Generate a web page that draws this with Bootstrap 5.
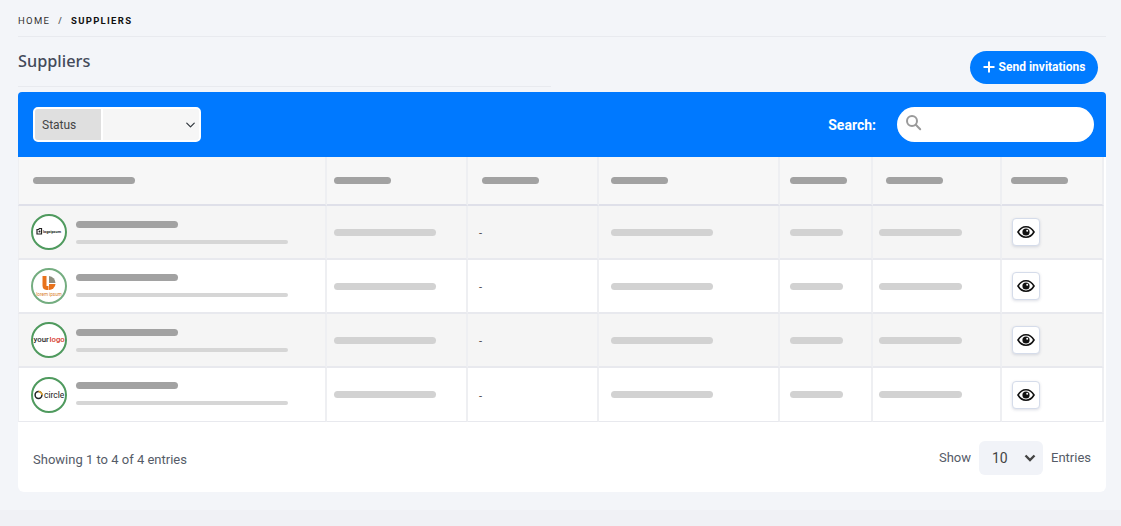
<!DOCTYPE html>
<html lang="en">
<head>
	<meta charset="utf-8">
	<meta name="viewport" content="width=device-width, initial-scale=1">
	<link href="https://cdn.jsdelivr.net/npm/bootstrap@5.3.3/dist/css/bootstrap.min.css" rel="stylesheet">
	<script src="https://cdn.jsdelivr.net/npm/bootstrap@5.3.3/dist/js/bootstrap.bundle.min.js"></script>
	<title>Suppliers</title>
	<style>
		body { background: linear-gradient(#f3f5f9 510px, #f0f1f5 510px); font-family: Roboto, sans-serif; overflow: hidden; }
		.page-wrap { padding: 0 15px 0 18px; height: 526px; }
		.crumb-bar { height: 37px; padding-top: 15px; border-bottom: 1px solid #e8eaef; }
		.crumb-bar .breadcrumb { --bs-breadcrumb-divider-color: #666; --bs-breadcrumb-item-padding-x: 8px; font-size: 9.5px; line-height: 11px; letter-spacing: 1.3px; margin: 0; }
		.crumb-bar .breadcrumb-item { color: #333; }
		.crumb-bar .breadcrumb-item.active { color: #111; font-weight: 700; }
		.title-row { height: 55px; }
		.title-left { width: 533px; height: 50px; border-bottom: 1px solid #e8eaef; }
		.title-left h1 { font-family: "Noto Sans", sans-serif; font-size: 16.3px; font-weight: 500; color: #434a5a; margin: 13px 0 0; line-height: 22px; }
		.invite-btn { background: #007bff; color: #fff; border: 0; border-radius: 17px; width: 128px; height: 33px; margin: 14px 8px 0 0; font-size: 12px; font-weight: 700; padding: 0 0 2px; }
		.filter-bar { background: #0079ff; height: 65px; padding: 0 12px 0 15px; border-radius: 4px 4px 0 0; }
		.status-group { width: 168px; height: 35px; border: 2px solid #fff; border-radius: 5px; background: #f6f6f6; flex-wrap: nowrap; overflow: hidden; }
		.status-group .input-group-text { width: 67px; height: 31px; background: #dfdfdf; border: 0; border-radius: 0; font-size: 12px; color: #444; padding: 0 0 0 7px; }
		.status-group .form-select { height: 31px; border: 0; border-left: 2px solid #fff; border-radius: 0; background-color: #f6f6f6; background-size: 13px 10px; background-position: right 2px center; }
		.search-label { color: #fff; font-size: 14px; font-weight: 700; margin: 2px 21px 0 0; }
		.search-box { width: 197px; height: 35px; }
		.search-box .form-control { height: 35px; border: 0; border-radius: 18px; padding-left: 32px; }
		.search-ico { position: absolute; left: 8px; top: 7px; }
		.main-panel { background: #fff; border-radius: 0 0 6px 6px; height: 335px; }
		.supplier-table { table-layout: fixed; width: 1086px; margin: 0; border-collapse: separate; border-spacing: 0; }
		.supplier-table th, .supplier-table td { padding: 0; vertical-align: middle; border-bottom: 2px solid #e8e9ee; border-right: 2px solid #eeeff2; box-shadow: none; }
		.supplier-table th { height: 49px; background: #f7f7f7; border-bottom-color: #dfe0e9; }
		.supplier-table td { height: 54px; background: #fff; }
		.supplier-table tbody tr:nth-child(odd) td { background: #f5f5f5; }
		.supplier-table tbody tr:last-child td { border-bottom-width: 1px; height: 54px; }
		.supplier-table th:first-child, .supplier-table td:first-child { border-left: 1px solid #eeeff2; }
		.col-a { width: 309px; } .col-b { width: 141px; } .col-c { width: 131px; } .col-d { width: 181px; }
		.col-e { width: 93px; } .col-f { width: 129px; } .col-g { width: 102px; }
		.skel { display: block; border-radius: 4px; }
		.skel-dark { height: 7px; background: #a2a2a2; }
		.skel-mid { height: 7px; background: #d2d2d2; }
		.skel-thin { height: 4px; background: #d6d6d6; margin-top: 12px; width: 212px; }
		.w-name { width: 102px; } .w-head { width: 57px; } .w-short { width: 53px; } .w-cell { width: 83px; }
		.logo-ring { width: 36px; height: 36px; flex: none; border: 2px solid #4f9a5e; border-radius: 50%; background: #fff; margin: 0 9px 0 12px; overflow: hidden; }
		.logo-ring svg { display: block; }
		.supplier-table tbody tr:nth-child(2) .logo-ring { border-color: #74ad80; }
		.supplier-table tbody tr:nth-child(even) .name-stack { margin-top: -2px; }
		.head-a { margin-left: 14px; } .head-b { margin-left: 7px; } .head-c { margin-left: 14px; } .head-d { margin-left: 12px; } .head-e { margin-left: 10px; } .head-f { margin-left: 13px; } .head-g { margin-left: 9px; }
		.cell-b { margin-left: 7px; } .cell-d { margin-left: 12px; } .cell-e { margin-left: 10px; } .cell-f { margin-left: 6px; }
		.dash-mark { font-size: 11px; color: #444; padding-left: 11px; }
		.eye-btn { width: 28px; height: 28px; padding: 0; background: #fff; border: 1px solid #d5dcea; border-radius: 4px; box-shadow: 0 1px 3px rgba(60, 70, 110, .18); margin-left: 10px; }
		.table-foot { height: 70px; padding: 0 15px; color: #555b68; font-size: 13px; }
		.foot-info { margin-top: 6px; }
		.foot-entries { margin-top: 2px; }
		.entries-select { width: 64px; height: 34px; margin: 0 8px; border: 0; background-color: #f1f3f8; font-size: 14px; color: #444; padding: 0 0 0 13px; background-position: right 7px center; background-size: 12px 10px; background-image: url("data:image/svg+xml,%3csvg xmlns='http://www.w3.org/2000/svg' viewBox='0 0 12 10'%3e%3cpath fill='none' stroke='%23444' stroke-width='2.4' d='M1.5 2.5 6 7l4.500-4.500'/%3e%3c/svg%3e"); }
	</style>
</head>
<body>
	<div class="page-wrap">
		<div class="crumb-bar">
			<ol class="breadcrumb">
				<li class="breadcrumb-item">HOME</li>
				<li class="breadcrumb-item active">SUPPLIERS</li>
			</ol>
		</div>

		<div class="title-row d-flex justify-content-between align-items-start">
			<div class="title-left"><h1>Suppliers</h1></div>
			<button type="button" class="invite-btn d-flex align-items-center justify-content-center gap-1">
				<svg width="12" height="12" viewBox="0 0 12 12"><path d="M6 .5v11M.5 6h11" stroke="#fff" stroke-width="2"/></svg>
				Send invitations
			</button>
		</div>

		<div class="filter-bar d-flex align-items-center justify-content-between">
			<div class="input-group status-group">
				<span class="input-group-text">Status</span>
				<select class="form-select" aria-label="Status"></select>
			</div>
			<div class="d-flex align-items-center">
				<label class="search-label" for="search">Search:</label>
				<div class="search-box position-relative">
					<input type="text" class="form-control" id="search">
					<svg class="search-ico" width="17" height="17" viewBox="0 0 17 17" fill="none" stroke="#9a9a9a" stroke-width="2"><circle cx="7" cy="7" r="5"/><path d="M10.8 10.8l4.4 4.4" stroke-linecap="round"/></svg>
				</div>
			</div>
		</div>

		<div class="main-panel">
			<table class="table supplier-table">
				<colgroup>
					<col class="col-a"><col class="col-b"><col class="col-c"><col class="col-d"><col class="col-e"><col class="col-f"><col class="col-g">
				</colgroup>
				<thead>
					<tr>
						<th><span class="skel skel-dark w-name head-a"></span></th>
						<th><span class="skel skel-dark w-head head-b"></span></th>
						<th><span class="skel skel-dark w-head head-c"></span></th>
						<th><span class="skel skel-dark w-head head-d"></span></th>
						<th><span class="skel skel-dark w-head head-e"></span></th>
						<th><span class="skel skel-dark w-head head-f"></span></th>
						<th><span class="skel skel-dark w-head head-g"></span></th>
					</tr>
				</thead>
				<tbody>
					<tr>
						<td>
							<div class="d-flex align-items-center">
								<span class="logo-ring">
									<svg viewBox="0 0 32 32" width="32" height="32"><path d="M4 13.500h1.500l1-1h2v5.500H4z" fill="none" stroke="#222" stroke-width="1.200"/><circle cx="6.500" cy="15.500" r="1" fill="#222"/><text x="10" y="17" font-family="Roboto, sans-serif" font-size="3.800" font-weight="700" fill="#222">logoipsum</text></svg>
								</span>
								<div class="name-stack"><span class="skel skel-dark w-name"></span><span class="skel skel-thin"></span></div>
							</div>
						</td>
						<td><span class="skel skel-mid w-name cell-b"></span></td>
						<td><span class="dash-mark">-</span></td>
						<td><span class="skel skel-mid w-name cell-d"></span></td>
						<td><span class="skel skel-mid w-short cell-e"></span></td>
						<td><span class="skel skel-mid w-cell cell-f"></span></td>
						<td><button type="button" class="eye-btn d-flex align-items-center justify-content-center" aria-label="View"><svg width="18" height="14" viewBox="0 0 18 14"><path d="M1 7s3-5.200 8-5.200S17 7 17 7s-3 5.200-8 5.200S1 7 1 7z" fill="#fff" stroke="#111" stroke-width="1.600"/><circle cx="9" cy="7" r="3.600" fill="#111"/><circle cx="10.200" cy="5.800" r="1" fill="#fff"/></svg></button></td>
					</tr>
					<tr>
						<td>
							<div class="d-flex align-items-center">
								<span class="logo-ring">
									<svg viewBox="0 0 32 32" width="32" height="32"><path d="M9.500 6h4v10h2v4h-2a4.500 4.500 0 0 1-4-4.500z" fill="#e8721c"/><path d="M16 6a7 7 0 0 1 6.500 7H16z" fill="#8e8e80"/><path d="M16 14h6.500a6.500 6.500 0 0 1-6.500 6z" fill="#e8721c"/><text x="16" y="26" text-anchor="middle" font-family="Roboto, sans-serif" font-size="4.600" fill="#d9822b">lorem ipsum</text></svg>
								</span>
								<div class="name-stack"><span class="skel skel-dark w-name"></span><span class="skel skel-thin"></span></div>
							</div>
						</td>
						<td><span class="skel skel-mid w-name cell-b"></span></td>
						<td><span class="dash-mark">-</span></td>
						<td><span class="skel skel-mid w-name cell-d"></span></td>
						<td><span class="skel skel-mid w-short cell-e"></span></td>
						<td><span class="skel skel-mid w-cell cell-f"></span></td>
						<td><button type="button" class="eye-btn d-flex align-items-center justify-content-center" aria-label="View"><svg width="18" height="14" viewBox="0 0 18 14"><path d="M1 7s3-5.200 8-5.200S17 7 17 7s-3 5.200-8 5.200S1 7 1 7z" fill="#fff" stroke="#111" stroke-width="1.600"/><circle cx="9" cy="7" r="3.600" fill="#111"/><circle cx="10.200" cy="5.800" r="1" fill="#fff"/></svg></button></td>
					</tr>
					<tr>
						<td>
							<div class="d-flex align-items-center">
								<span class="logo-ring">
									<svg viewBox="0 0 32 32" width="32" height="32"><text x="0.500" y="18" font-family="Roboto, sans-serif" font-size="7.800" font-weight="500" fill="#2a2a2a">your</text><text x="16.500" y="18" font-family="Roboto, sans-serif" font-size="7.800" font-weight="500" fill="#d63a2a">logo</text></svg>
								</span>
								<div class="name-stack"><span class="skel skel-dark w-name"></span><span class="skel skel-thin"></span></div>
							</div>
						</td>
						<td><span class="skel skel-mid w-name cell-b"></span></td>
						<td><span class="dash-mark">-</span></td>
						<td><span class="skel skel-mid w-name cell-d"></span></td>
						<td><span class="skel skel-mid w-short cell-e"></span></td>
						<td><span class="skel skel-mid w-cell cell-f"></span></td>
						<td><button type="button" class="eye-btn d-flex align-items-center justify-content-center" aria-label="View"><svg width="18" height="14" viewBox="0 0 18 14"><path d="M1 7s3-5.200 8-5.200S17 7 17 7s-3 5.200-8 5.200S1 7 1 7z" fill="#fff" stroke="#111" stroke-width="1.600"/><circle cx="9" cy="7" r="3.600" fill="#111"/><circle cx="10.200" cy="5.800" r="1" fill="#fff"/></svg></button></td>
					</tr>
					<tr>
						<td>
							<div class="d-flex align-items-center">
								<span class="logo-ring">
									<svg viewBox="0 0 32 32" width="32" height="32"><circle cx="5.500" cy="16" r="3.400" fill="none" stroke="#222" stroke-width="1.500"/><path d="M5.500 12.600a3.400 3.400 0 0 1 3.400 3.400" fill="none" stroke="#e5a52a" stroke-width="1.500"/><text x="11" y="19" font-family="Roboto, sans-serif" font-size="8.500" fill="#222">circle</text></svg>
								</span>
								<div class="name-stack"><span class="skel skel-dark w-name"></span><span class="skel skel-thin"></span></div>
							</div>
						</td>
						<td><span class="skel skel-mid w-name cell-b"></span></td>
						<td><span class="dash-mark">-</span></td>
						<td><span class="skel skel-mid w-name cell-d"></span></td>
						<td><span class="skel skel-mid w-short cell-e"></span></td>
						<td><span class="skel skel-mid w-cell cell-f"></span></td>
						<td><button type="button" class="eye-btn d-flex align-items-center justify-content-center" aria-label="View"><svg width="18" height="14" viewBox="0 0 18 14"><path d="M1 7s3-5.200 8-5.200S17 7 17 7s-3 5.200-8 5.200S1 7 1 7z" fill="#fff" stroke="#111" stroke-width="1.600"/><circle cx="9" cy="7" r="3.600" fill="#111"/><circle cx="10.200" cy="5.800" r="1" fill="#fff"/></svg></button></td>
					</tr>
				</tbody>
			</table>

			<div class="table-foot d-flex align-items-center justify-content-between">
				<div class="foot-info">Showing 1 to 4 of 4 entries</div>
				<div class="foot-entries d-flex align-items-center">
					<span>Show</span>
					<select class="form-select entries-select" aria-label="Entries"><option>10</option></select>
					<span>Entries</span>
				</div>
			</div>
		</div>
	</div>
</body>
</html>
